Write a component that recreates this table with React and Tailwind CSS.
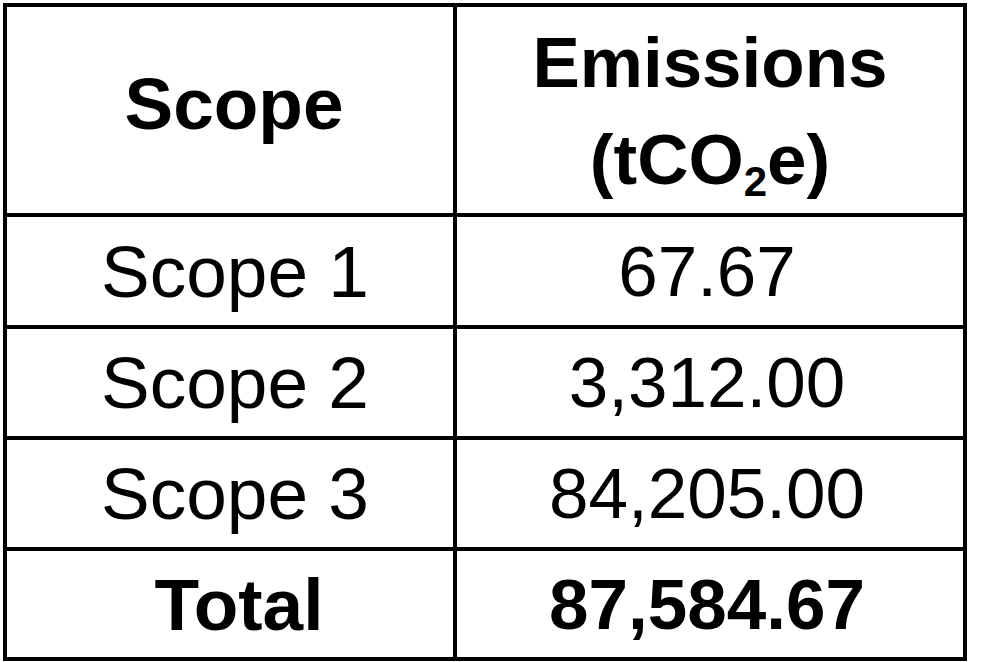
const ROWS = [
  { scope: 'Scope 1', value: '67.67', h: 'h-[108px]' },
  { scope: 'Scope 2', value: '3,312.00', h: 'h-[107px]' },
  { scope: 'Scope 3', value: '84,205.00', h: 'h-[107px]' },
]

function Cell({ children, className = '' }) {
  return (
    <div className={`bg-white flex items-center justify-center text-center ${className}`}>
      {children}
    </div>
  )
}

export default function App() {
  return (
    <div className="min-h-screen bg-white text-black font-['Helvetica','Liberation_Sans',Arial,sans-serif]">
      <div className="ml-[3px] pt-[3px]">
        <div className="grid grid-cols-[446px_506px] gap-[4px] p-[4px] bg-black w-[964px]">
          {/* Header */}
          <Cell className="h-[206px] text-[73px] font-bold leading-none">
            <span className="pl-[8px] pb-[14px]">Scope</span>
          </Cell>
          <Cell className="h-[206px] text-[71px] font-bold leading-[97px]">
            <div className="pt-[2px]">
              Emissions
              <br />
              (tCO<span className="relative top-[12px] text-[42px] leading-none">2</span>e)
            </div>
          </Cell>

          {/* Rows */}
          {ROWS.map(r => (
            <div key={r.scope} className="contents">
              <Cell className={`${r.h} text-[73px] leading-none`}>
                <span className="pl-[10px]">{r.scope}</span>
              </Cell>
              <Cell className={`${r.h} text-[71px] leading-none`}>
                <span className="pr-[6px]">{r.value}</span>
              </Cell>
            </div>
          ))}

          {/* Total */}
          <Cell className="h-[106px] text-[73px] font-bold leading-none">
            <span className="pl-[18px]">Total</span>
          </Cell>
          <Cell className="h-[106px] text-[71px] font-bold leading-none">
            <span className="pr-[6px]">87,584.67</span>
          </Cell>
        </div>
      </div>
    </div>
  )
}
